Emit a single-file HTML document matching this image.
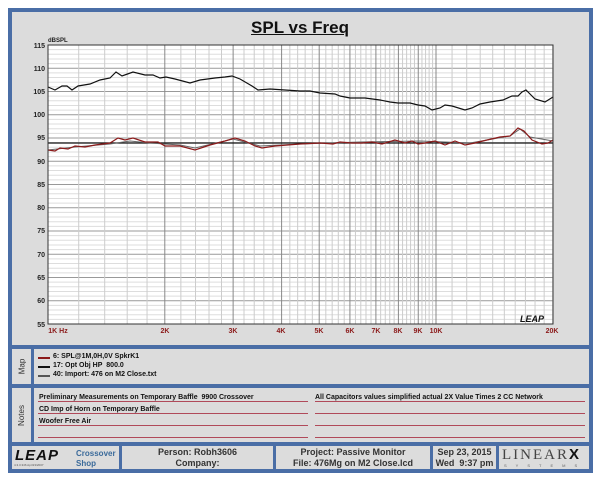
<!DOCTYPE html>
<html><head><meta charset="utf-8"><style>
*{margin:0;padding:0;box-sizing:border-box}
body{width:600px;height:480px;background:#fff;position:relative;font-family:"Liberation Sans",Arial,sans-serif;overflow:hidden}
.a{position:absolute}
.g{background:#dcdcdc}
.ln{position:absolute;height:1px;background:#b04a5a}
.t{font-size:7px;font-weight:bold;color:#111;position:absolute}
.f{font-size:9px;font-weight:bold;color:#333;text-align:center;position:absolute;line-height:11px}
</style></head><body>
<div class="a" style="left:8px;top:8px;width:585px;height:465px;background:#4a6ea6"></div>
<div class="a g" style="left:12px;top:12px;width:577px;height:333px"></div>
<div class="a" style="left:0;top:18px;width:600px;text-align:center;font-size:17px;font-weight:bold;text-decoration:underline;color:#111">SPL vs Freq</div>
<svg class="a" style="left:0;top:0" width="600" height="345">
<rect x="48" y="45" width="505" height="279" fill="#fff"/>
<g id="grid"></g>
<text x="48" y="42" font-size="6" font-weight="bold" fill="#222" font-family="Liberation Sans">dBSPL</text>
<g font-size="7" font-weight="bold" fill="#222" text-anchor="end" font-family="Liberation Sans">
<text x="45" y="48">115</text><text x="45" y="71">110</text><text x="45" y="94">105</text><text x="45" y="117">100</text><text x="45" y="140">95</text><text x="45" y="164">90</text><text x="45" y="187">85</text><text x="45" y="210">80</text><text x="45" y="233">75</text><text x="45" y="257">70</text><text x="45" y="280">65</text><text x="45" y="303">60</text><text x="45" y="327">55</text></g>
<g font-size="7" font-weight="bold" fill="#8b1a1a" text-anchor="middle" font-family="Liberation Sans">
<text x="58" y="333">1K Hz</text><text x="165" y="333">2K</text><text x="233" y="333">3K</text><text x="281" y="333">4K</text><text x="319" y="333">5K</text><text x="350" y="333">6K</text><text x="376" y="333">7K</text><text x="398" y="333">8K</text><text x="418" y="333">9K</text><text x="436" y="333">10K</text><text x="552" y="333">20K</text></g>
<polyline fill="none" stroke="#111" stroke-width="1.2" points="48,143 553,143"/>
<polyline fill="none" stroke="#666" stroke-width="1" points="48,150 75,147 110,144 130,141 150,143 180,145 195,148 233,139 260,146 300,144 360,142 420,141 470,143 510,136 520,129 530,137 553,141"/>
<polyline fill="none" stroke="#8b1a1a" stroke-width="1.2" points="48,150 55,151 60,148 68,149 75,146 85,147 95,145 110,143 118,138 125,140 133,138 145,142 158,142 165,146 180,146 195,150 210,145 225,141 235,138 245,141 255,146 262,148 275,146 300,144 320,143 333,144 340,142 352,143 362,143 372,142 382,144 395,140 405,143 412,141 418,144 425,143 435,141 445,145 455,141 465,145 475,143 487,140 500,137 510,136 518,128 524,131 532,140 542,144 548,143 553,140"/>
<polyline fill="none" stroke="#111" stroke-width="1.2" points="48,87 55,90 62,86 67,86 72,90 78,86 90,84 100,80 110,78 116,72 122,76 133,72 145,75 153,75 160,78 166,77 175,79 190,83 200,80 215,78 225,77 232,76 240,79 252,86 258,90 270,89 285,90 300,91 310,91 320,93 335,94 340,96 350,98 365,98 380,100 390,102 398,103 410,103 418,105 425,106 432,110 440,108 445,105 452,106 465,110 472,108 480,104 490,102 503,100 512,96 518,96 522,92 526,90 530,94 535,99 545,102 553,97"/>
<rect x="48" y="45" width="505" height="279" fill="none" stroke="#333" stroke-width="1"/>
<text x="520" y="322" font-size="9" font-weight="900" font-style="italic" fill="#111" font-family="Liberation Sans">LEAP</text>
</svg>
<script>
(function(){var g=document.getElementById('grid'),s='';
for(var d=0;d<=60;d++){var y=45+d*279/60;s+='<line x1="48" x2="553" y1="'+y+'" y2="'+y+'" stroke="'+(d%5==0?'#999':'#ddd')+'" stroke-width="1"/>';}
function X(f){return 48+388*Math.log10(f);}
for(var f=1;f<10;f+=0.2){var x=X(f);var maj=Math.abs(f-Math.round(f))<0.01;s+='<line y1="45" y2="324" x1="'+x+'" x2="'+x+'" stroke="'+(maj?'#888':'#ccc')+'"/>';}
for(var f=10;f<=20;f+=1){var x=X(f);s+='<line y1="45" y2="324" x1="'+x+'" x2="'+x+'" stroke="'+(f==10?'#888':'#ccc')+'"/>';}
g.innerHTML=s;})();
</script>
<div class="a g" style="left:12px;top:349px;width:19px;height:35px"></div>
<div class="a" style="left:12px;top:349px;width:19px;height:35px;display:flex;align-items:center;justify-content:center"><div style="transform:rotate(-90deg);font-size:8px;color:#333">Map</div></div>
<div class="a g" style="left:34px;top:349px;width:555px;height:35px"></div>
<div class="ln" style="left:38px;top:357px;width:12px;height:2px;background:#8b1a1a"></div><div class="t" style="left:53px;top:353px">6: SPL@1M,0H,0V SpkrK1</div>
<div class="ln" style="left:38px;top:366px;width:12px;height:2px;background:#111"></div><div class="t" style="left:53px;top:362px">17: Opt Obj HP&nbsp; 800.0</div>
<div class="ln" style="left:38px;top:375px;width:12px;height:2px;background:#555"></div><div class="t" style="left:53px;top:371px">40: Import: 476 on M2 Close.txt</div>
<div class="a g" style="left:12px;top:388px;width:19px;height:54px;display:flex;align-items:center;justify-content:center"><div style="transform:rotate(-90deg);font-size:8px;color:#333">Notes</div></div>
<div class="a g" style="left:34px;top:388px;width:555px;height:54px"></div>
<div class="ln" style="left:38px;top:401px;width:270px"></div><div class="ln" style="left:315px;top:401px;width:270px"></div>
<div class="ln" style="left:38px;top:413px;width:270px"></div><div class="ln" style="left:315px;top:413px;width:270px"></div>
<div class="ln" style="left:38px;top:425px;width:270px"></div><div class="ln" style="left:315px;top:425px;width:270px"></div>
<div class="ln" style="left:38px;top:437px;width:270px"></div><div class="ln" style="left:315px;top:437px;width:270px"></div>
<div class="t" style="left:39px;top:394px">Preliminary Measurements on Temporary Baffle&nbsp; 9900 Crossover</div>
<div class="t" style="left:315px;top:394px">All Capacitors values simplified actual 2X Value Times 2 CC Network</div>
<div class="t" style="left:39px;top:406px">CD Imp of Horn on Temporary Baffle</div>
<div class="t" style="left:39px;top:418px">Woofer Free Air</div>
<div class="a g" style="left:12px;top:446px;width:107px;height:23px"></div>
<div class="a" style="left:15px;top:447px;font-size:15px;font-weight:900;letter-spacing:1px;color:#111;font-style:italic">LEAP</div>
<div class="a" style="left:14px;top:463px;font-size:3px;color:#555">4.3.3.346 Apr/23/2007</div>
<div class="a" style="left:76px;top:449px;font-size:8px;font-weight:bold;color:#3a6a9a;line-height:10px">Crossover<br>Shop</div>
<div class="a g" style="left:122px;top:446px;width:151px;height:23px"></div>
<div class="f" style="left:122px;top:447px;width:151px">Person: Robh3606<br>Company:</div>
<div class="a g" style="left:276px;top:446px;width:154px;height:23px"></div>
<div class="f" style="left:276px;top:447px;width:154px">Project: Passive Monitor<br>File: 476Mg on M2 Close.lcd</div>
<div class="a g" style="left:433px;top:446px;width:63px;height:23px"></div>
<div class="f" style="left:433px;top:447px;width:63px">Sep 23, 2015<br>Wed&nbsp; 9:37 pm</div>
<div class="a g" style="left:499px;top:446px;width:90px;height:23px"></div>
<div class="a" style="left:502px;top:446px;font-family:'Liberation Serif',serif;font-size:15px;letter-spacing:2px;color:#444">LINEAR<b style="color:#111;font-family:'Liberation Sans'">X</b></div>
<div class="a" style="left:504px;top:463px;font-size:4px;letter-spacing:9px;color:#666">SYSTEMS</div>
</body></html>
